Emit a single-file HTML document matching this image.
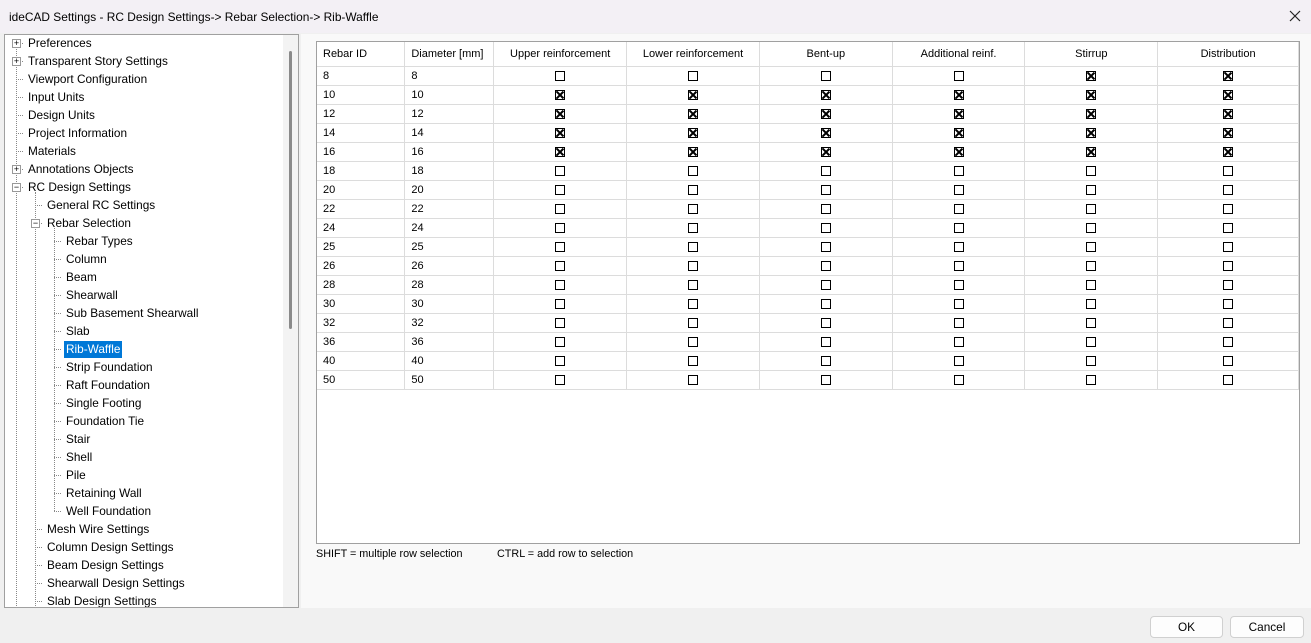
<!DOCTYPE html><html><head><style>
*{margin:0;padding:0;box-sizing:border-box}
body{width:1311px;height:643px;background:#f0f0f0;font-family:"Liberation Sans",sans-serif;font-size:11.8px;color:#000;position:relative;overflow:hidden}
.a{position:absolute}
.title{left:0;top:0;width:1311px;height:33px;background:#f3f0f5;font-size:11.9px;padding:10px 0 0 9px}
.tree{left:4px;top:34px;width:295px;height:574px;background:#fff;border:1px solid #a0a0a0;overflow:hidden}
.ti{position:absolute;white-space:nowrap;line-height:16px;height:17px}
.dh{position:absolute;border-top:1px dotted #888;width:7px}
.dv{position:absolute;border-left:1px dotted #888}
.pm{position:absolute;width:9px;height:9px;border:1px solid #999;background:#fff;font-size:9px;line-height:7px;text-align:center;color:#000}
.right{left:301px;top:34px;width:1010px;height:574px;background:#f9f9f9}
.grid{left:316px;top:41px;width:984px;height:503px;background:#fff;border:1px solid #a0a0a0}
table{border-collapse:collapse;table-layout:fixed;font-size:11px}
td{border-right:1px solid #dcdcdc;border-bottom:1px solid #dcdcdc;height:19px;padding:0 6px;text-align:center}
tr.h td{height:24px;border-bottom:1px solid #dcdcdc}
td.l{text-align:left}
.cb{display:inline-block;width:10px;height:10px;border:1px solid #000;vertical-align:middle;position:relative}
.cb.x::before,.cb.x::after{content:"";position:absolute;left:3px;top:-1px;width:1.5px;height:10px;background:#000;transform:rotate(45deg)}
.cb.x::after{transform:rotate(-45deg)}
.btn{top:616px;height:22px;background:#fdfdfd;border:1px solid #d0d0d0;border-radius:4px;text-align:center;line-height:20px}
</style></head><body>
<div class="a title">ideCAD Settings - RC Design Settings-&gt; Rebar Selection-&gt; Rib-Waffle</div>
<svg class="a" style="left:1289px;top:10px" width="12" height="12"><path d="M1 1L11 11M11 1L1 11" stroke="#222" stroke-width="1.2"/></svg>
<div class="a tree">
<div class="a" style="left:278px;top:0;width:16px;height:574px;background:#f3f3f3"></div>
<div class="a" style="left:284px;top:16px;width:3px;height:278px;background:#8a8a8a;border-radius:2px"></div>
<div class="dv" style="left:11px;top:7px;height:566px"></div>
<div class="dv" style="left:30px;top:157px;height:416px"></div>
<div class="dv" style="left:49px;top:193px;height:283px"></div>
<div id="t"></div>
</div>
<div class="a right"></div>
<div class="a grid"><table id="g"></table></div>
<div class="a" style="left:316px;top:548px;font-size:10.8px">SHIFT = multiple row selection</div>
<div class="a" style="left:497px;top:548px;font-size:10.8px">CTRL = add row to selection</div>
<div class="a btn" style="left:1150px;width:73px">OK</div>
<div class="a btn" style="left:1230px;width:74px">Cancel</div>
<script>
var it=[[0,"Preferences","+"],[0,"Transparent Story Settings","+"],[0,"Viewport Configuration"],[0,"Input Units"],[0,"Design Units"],[0,"Project Information"],[0,"Materials"],[0,"Annotations Objects","+"],[0,"RC Design Settings","-"],[1,"General RC Settings"],[1,"Rebar Selection","-"],[2,"Rebar Types"],[2,"Column"],[2,"Beam"],[2,"Shearwall"],[2,"Sub Basement Shearwall"],[2,"Slab"],[2,"Rib-Waffle","s"],[2,"Strip Foundation"],[2,"Raft Foundation"],[2,"Single Footing"],[2,"Foundation Tie"],[2,"Stair"],[2,"Shell"],[2,"Pile"],[2,"Retaining Wall"],[2,"Well Foundation"],[1,"Mesh Wire Settings"],[1,"Column Design Settings"],[1,"Beam Design Settings"],[1,"Shearwall Design Settings"],[1,"Slab Design Settings"]];
var h="";it.forEach(function(e,i){var y=18*i,lx=11+19*e[0],tx=23+19*e[0];
h+='<div class="dh" style="left:'+lx+'px;top:'+(y+8)+'px"></div>';
if(e[2]=="+"||e[2]=="-")h+='<div class="pm" style="left:'+(lx-4)+'px;top:'+(y+4)+'px">'+(e[2]=="+"?"+":"−")+'</div>';
h+='<div class="ti" style="left:'+tx+'px;top:'+y+'px;'+(e[2]=="s"?'background:#0078d7;color:#fff;padding:0 2px;margin-left:-2px':'')+'">'+e[1]+'</div>';});
document.getElementById("t").innerHTML=h;
var w=[88,89,133,133,133,133,133,141],hd=["Rebar ID","Diameter [mm]","Upper reinforcement","Lower reinforcement","Bent-up","Additional reinf.","Stirrup","Distribution"];
var g='<colgroup>'+w.map(function(x){return '<col style="width:'+x+'px">'}).join('')+'</colgroup><tr class="h">'+hd.map(function(x,i){return '<td'+(i<2?' class="l"':'')+'>'+x+'</td>'}).join('')+'</tr>';
[8,10,12,14,16,18,20,22,24,25,26,28,30,32,36,40,50].forEach(function(d){g+='<tr><td class="l">'+d+'</td><td class="l">'+d+'</td>';for(var c=0;c<6;c++){var x=(d>=10&&d<=16)||(d==8&&c>=4);g+='<td><span class="cb'+(x?' x':'')+'"></span></td>';}g+='</tr>';});
document.getElementById("g").innerHTML=g;
</script>
</body></html>
